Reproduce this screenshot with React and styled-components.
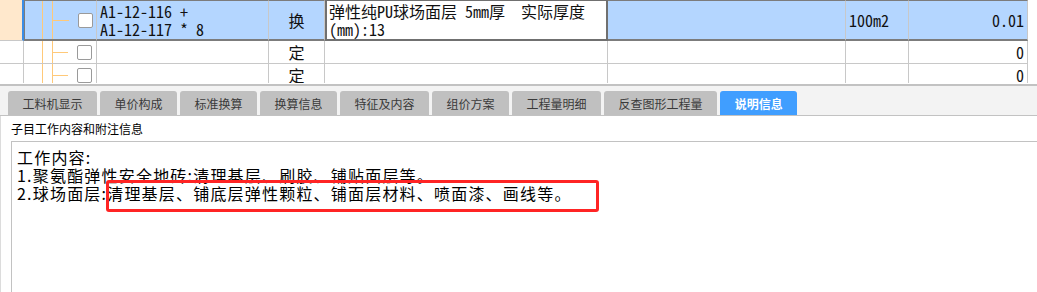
import styled, { createGlobalStyle } from "styled-components";

const GlobalStyle = createGlobalStyle`
  html, body {
    margin: 0;
    padding: 0;
    background: #ffffff;
  }
  body {
    width: 1037px;
    height: 292px;
    overflow: hidden;
    font-family: "Noto Sans CJK SC", sans-serif;
  }
`;

const rows = [
  {
    id: 1,
    selected: true,
    code: ["A1-12-116 +", "A1-12-117 * 8"],
    type: "换",
    name: ["弹性纯PU球场面层 5mm厚  实际厚度", "(mm):13"],
    unit: "100m2",
    qty: "0.01",
  },
  { id: 2, type: "定", qty: "0" },
  { id: 3, type: "定", qty: "0" },
];

const tabs = [
  "工料机显示",
  "单价构成",
  "标准换算",
  "换算信息",
  "特征及内容",
  "组价方案",
  "工程量明细",
  "反查图形工程量",
  "说明信息",
];

export default function App() {
  return (
    <Page>
      <GlobalStyle />
      <Grid>
        {rows.map((r) => (
          <Row key={r.id} $selected={r.selected}>
            <HeadCell $selected={r.selected} />
            <TreeCell $selected={r.selected}>
              <Connector />
              <CheckBox />
            </TreeCell>
            <Cell $selected={r.selected} $valign="flex-start">
              <Lines>
                {(r.code || []).map((l) => (
                  <span key={l}>{l}</span>
                ))}
              </Lines>
            </Cell>
            <Cell $selected={r.selected} $align="center">{r.type}</Cell>
            {r.selected ? (
              <EditCell>
                <Lines>
                  {r.name.map((l) => (
                    <span key={l}>{l}</span>
                  ))}
                </Lines>
              </EditCell>
            ) : (
              <Cell />
            )}
            <Cell $selected={r.selected} />
            <Cell $selected={r.selected}>{r.unit}</Cell>
            <Cell $selected={r.selected} $align="flex-end">{r.qty}</Cell>
          </Row>
        ))}
      </Grid>

      <TabBar>
        {tabs.map((t) => (
          <Tab key={t} $active={t === "说明信息"}>{t}</Tab>
        ))}
      </TabBar>

      <Panel>
        <Caption>子目工作内容和附注信息</Caption>
        <NoteBox>
          <NoteText>
            <span>工作内容:</span>
            <span>1.聚氨酯弹性安全地砖:清理基层、刷胶、铺贴面层等。</span>
            <span>2.球场面层:清理基层、铺底层弹性颗粒、铺面层材料、喷面漆、画线等。</span>
          </NoteText>
          <Highlight />
        </NoteBox>
      </Panel>
    </Page>
  );
}

const Page = styled.div`
  display: flex;
  flex-direction: column;
  width: 1037px;
  height: 292px;
  background: #ffffff;
`;

const Grid = styled.div`
  height: 83px;
  margin-bottom: 1px;
  overflow: hidden;
  font-family: "Noto Sans Mono CJK SC", "Liberation Mono", "Noto Sans CJK SC", monospace;
  font-size: 16px;
  line-height: 18px;
  color: #111111;
`;

const Row = styled.div`
  display: grid;
  grid-template-columns: 24px 73px 172px 56px 283px 238px 63px 119px;
  height: ${(p) => (p.$selected ? "41px" : "23px")};
`;

const HeadCell = styled.div`
  box-sizing: border-box;
  background: ${(p) => (p.$selected ? "#ffe8cc" : "#ffffff")};
  border-right: ${(p) => (p.$selected ? "2px solid #3b8de6" : "1px solid #c8c8c8")};
  border-bottom: 1px solid #c8c8c8;
`;

const Cell = styled.div`
  box-sizing: border-box;
  display: flex;
  align-items: ${(p) => p.$valign || "center"};
  justify-content: ${(p) => p.$align || "flex-start"};
  padding: 0 3px 0 3px;
  white-space: pre;
  overflow: hidden;
  background: ${(p) => (p.$selected ? "#b4d6ff" : "#ffffff")};
  border-right: 1px solid #c8c8c8;
  border-top: ${(p) => (p.$selected ? "1px solid #7c7c7c" : "none")};
  border-bottom: ${(p) => (p.$selected ? "2px solid #7c7c7c" : "1px solid #c8c8c8")};
`;

const TreeCell = styled(Cell)`
  padding: 0;
  border-left: ${(p) => (p.$selected ? "1px solid #7c7c7c" : "none")};
  background-color: ${(p) => (p.$selected ? "#b4d6ff" : "#ffffff")};
  background-image: linear-gradient(#ffc979, #ffc979), linear-gradient(#ffc979, #ffc979);
  background-size: 1px 100%, 1px 100%;
  background-position: ${(p) => (p.$selected ? "17px 0, 27px 0" : "18px 0, 28px 0")};
  background-repeat: no-repeat;
`;

const Connector = styled.span`
  width: 16px;
  height: 1px;
  margin-left: 28px;
  background: #ffc979;
`;

const CheckBox = styled.span`
  box-sizing: border-box;
  width: 15px;
  height: 15px;
  margin-left: 9px;
  border: 1px solid #9a9a9a;
  border-radius: 2px;
  background: #ffffff;
`;

const EditCell = styled.div`
  box-sizing: border-box;
  padding: 0 2px;
  white-space: pre;
  background: #ffffff;
  border: 2px solid #707070;
  border-top-width: 1px;
`;

const Lines = styled.div`
  display: flex;
  flex-direction: column;
  padding-top: 1px;
`;

const TabBar = styled.div`
  box-sizing: border-box;
  display: flex;
  align-items: flex-end;
  gap: 3px;
  height: 32px;
  padding-left: 8px;
  background: #f3f3f3;
  border-top: 2px solid #c2c2c2;
  border-bottom: 1px solid #c2c2c2;
`;

const Tab = styled.div`
  height: 24px;
  padding: 0 14.5px;
  display: flex;
  align-items: center;
  border-radius: 3px 3px 0 0;
  font-size: 12px;
  font-weight: ${(p) => (p.$active ? 700 : 400)};
  color: ${(p) => (p.$active ? "#ffffff" : "#3a3a3a")};
  background: ${(p) => (p.$active ? "#409eff" : "#c0c0c0")};
`;

const Panel = styled.div`
  flex: 1;
  display: flex;
  flex-direction: column;
  border-left: 1px solid #dcdcdc;
`;

const Caption = styled.div`
  height: 25px;
  display: flex;
  align-items: center;
  padding-left: 10px;
  font-size: 12px;
  color: #000000;
`;

const NoteBox = styled.div`
  position: relative;
  flex: 1;
  margin-left: 10px;
  border-top: 1px solid #c2c2c2;
  border-left: 1px solid #c2c2c2;
`;

const NoteText = styled.div`
  display: flex;
  flex-direction: column;
  padding: 6px 0 0 5px;
  font-size: 16px;
  line-height: 18px;
  letter-spacing: 1.2px;
  color: #000000;
`;

const Highlight = styled.div`
  position: absolute;
  left: 94px;
  top: 38px;
  width: 493px;
  height: 32px;
  box-sizing: border-box;
  border: 3px solid #ff2424;
  border-radius: 3px;
`;
